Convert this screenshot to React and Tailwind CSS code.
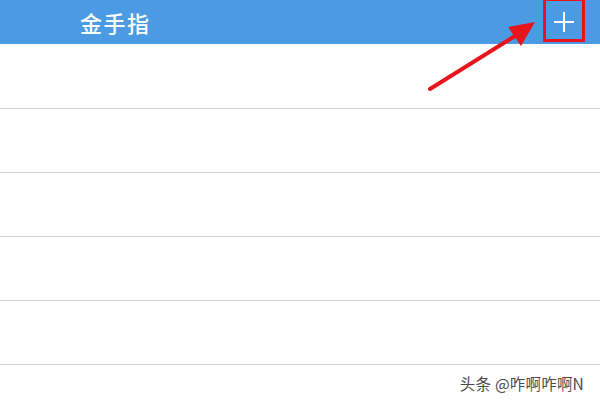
export default function App() {
  const rows = [0, 1, 2, 3, 4];
  return (
    <div
      className="relative w-[600px] h-[400px] bg-white overflow-hidden"
      style={{ fontFamily: '"Noto Sans CJK SC", "Noto Sans", sans-serif' }}
    >
      {/* Header */}
      <div className="h-[44px] bg-[#4b9be4] flex items-center justify-between pl-[80px] pr-[15px]">
        <span className="text-white text-[22px] font-medium tracking-[1.5px]">金手指</span>
        <div className="relative w-[42px] h-[40px] flex items-center justify-center">
          <svg width="22" height="22" viewBox="0 0 22 22">
            <path d="M11 1v20M1 11h20" stroke="white" strokeWidth="2" />
          </svg>
          <div className="absolute -top-[4px] left-0 w-[42px] h-[44px] border-[3px] border-[#e8141b]" />
        </div>
      </div>

      {/* List rows */}
      <div className="flex flex-col mt-[1px]">
        {rows.map((r) => (
          <div key={r} className="h-[64px] border-b border-[#d6d6d6]" />
        ))}
      </div>

      {/* Annotation arrow */}
      <svg className="absolute left-0 top-0" width="600" height="400">
        <line x1="430" y1="89" x2="515" y2="36" stroke="#e8141b" strokeWidth="4" strokeLinecap="round" />
        <polygon points="535,22 508,27 521,46" fill="#e8141b" />
      </svg>

      {/* Watermark */}
      <div className="absolute right-[16px] bottom-[9px] text-[15.5px] text-[#4a4a4a] tracking-[0.2px] leading-none">
        头条 @咋啊咋啊N
      </div>
    </div>
  );
}
